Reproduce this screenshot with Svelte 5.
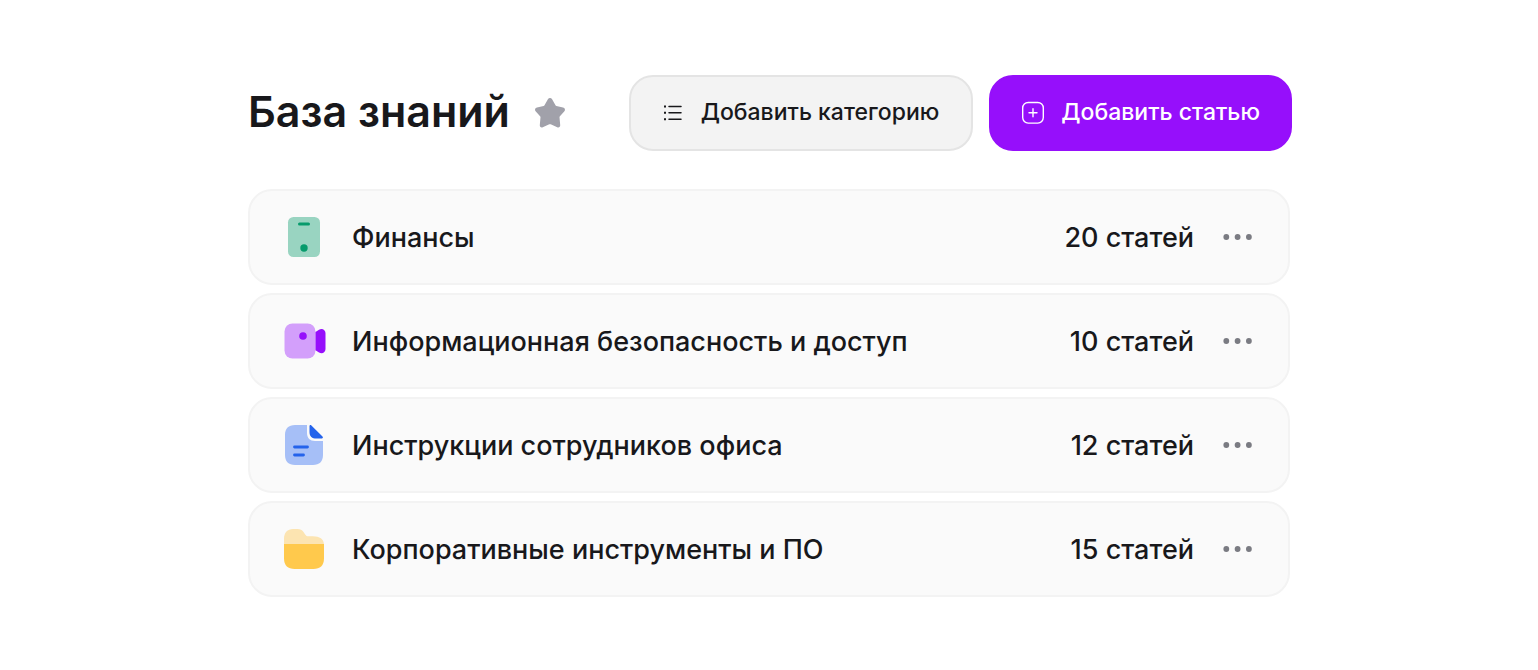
<script lang="ts">
  type Category = { icon: "phone" | "camera" | "doc" | "folder"; title: string; count: number };

  const categories: Category[] = [
    { icon: "phone", title: "Финансы", count: 20 },
    { icon: "camera", title: "Информационная безопасность и доступ", count: 10 },
    { icon: "doc", title: "Инструкции сотрудников офиса", count: 12 },
    { icon: "folder", title: "Корпоративные инструменты и ПО", count: 15 },
  ];

  let favorite = $state(false);
</script>

<main class="page">
  <header class="head">
    <h1>База знаний</h1>
    <button
      class="star"
      class:on={favorite}
      type="button"
      aria-label="Избранное"
      aria-pressed={favorite}
      onclick={() => (favorite = !favorite)}
    >
      <svg width="32" height="32" viewBox="0 0 32 32">
        <path d="M13.9 2.2C14.8.7 17.2.7 18.1 2.2L21.5 8.3C21.7 8.7 22 8.9 22.4 9L29 10.4C30.9 10.8 31.6 12.8 30.4 14.2L25.900 19.200C25.600 19.500 25.500 19.900 25.500 20.300L26.200 28C26.400 29.900 24.900 31.100 23.200 30.300L16.700 27.300C16.200 27.100 15.800 27.100 15.300 27.300L8.800 30.300C7.100 31.100 5.600 29.900 5.800 28L6.500 20.300C6.500 19.900 6.400 19.500 6.100 19.200L1.600 14.200C.4 12.800 1.100 10.800 3 10.400L9.600 9C10 8.900 10.300 8.700 10.500 8.300Z" />
      </svg>
    </button>
    <div class="actions">
      <button class="btn" type="button">
        <svg width="24" height="24" viewBox="0 0 24 24" fill="none" stroke="currentColor">
          <path stroke-width="1.500" stroke-linecap="round" d="M8 5.500h12M8 11.800h12M8 18.200h12" />
          <path stroke-width="2" d="M3 5.500h2M3 11.800h2M3 18.200h2" />
        </svg>
        <span>Добавить категорию</span>
      </button>
      <button class="btn primary" type="button">
        <svg width="24" height="24" viewBox="0 0 24 24" fill="none" stroke="currentColor" stroke-width="1.400" stroke-linecap="round">
          <rect x="1.700" y="1.500" width="20.600" height="20.600" rx="5.500" />
          <path d="M12 7.800v8M8 11.800h8" />
        </svg>
        <span>Добавить статью</span>
      </button>
    </div>
  </header>

  <ul class="list">
    {#each categories as c (c.title)}
      <li class="row">
        <svg class="icon" width="48" height="48" viewBox="0 0 48 48">
          {#if c.icon === "phone"}
            <rect x="8" y="4" width="32" height="40" rx="5.500" fill="#99d4c1" />
            <rect x="18" y="9.500" width="12" height="3" rx="1.500" fill="#079b6c" />
            <circle cx="24" cy="35" r="3.700" fill="#079b6c" />
          {:else if c.icon === "camera"}
            <rect x="4.500" y="6.500" width="31" height="35" rx="8" fill="#d39ffb" />
            <path d="M35.500 15L39 12.700C42 10.800 45.500 12.700 45.500 16V32C45.500 35.500 42 37.500 39 35.500L35.500 33.200Z" fill="#960ffb" />
            <circle cx="23" cy="19" r="3.800" fill="#960ffb" />
          {:else if c.icon === "doc"}
            <path d="M15 4H27V12C27 17 30 20 35 20H43V34C43 40.500 39.500 44 33 44H15C8.500 44 5 40.500 5 34V14C5 7.500 8.500 4 15 4Z" fill="#a6bff7" />
            <path d="M29.500 5.200C29.500 4 30.600 3.700 31.400 4.500L42.500 15.600C43.300 16.500 42.900 17.600 41.700 17.600H36.500C32 17.600 29.500 15.500 29.500 11Z" fill="#2463eb" />
            <path d="M14.500 26H27.500M14.500 34H23.500" stroke="#2463eb" stroke-width="2.800" stroke-linecap="round" />
          {:else}
            <path d="M4 20V14C4 7.500 7.500 4 13 4H17.500C20.500 4 21.800 4.700 23.500 7L25.200 9.500C26.200 10.900 26.800 11.300 28.500 11.300H33C39.500 11.300 44 14 44 20Z" fill="#fce4b1" />
            <path d="M4 19H44V33.500C44 40.500 40 44 33.500 44H14.500C8 44 4 40.500 4 33.500Z" fill="#ffc94c" />
          {/if}
        </svg>
        <a class="title" href="#{c.icon}">{c.title}</a>
        <span class="count">{c.count} статей</span>
        <button class="more" type="button" aria-label="Действия: {c.title}">
          <svg width="32" height="32" viewBox="0 0 32 32" fill="#7a7b82">
            <circle cx="4.300" cy="16" r="2.900" />
            <circle cx="15.600" cy="16" r="2.900" />
            <circle cx="26.900" cy="16" r="2.900" />
          </svg>
        </button>
      </li>
    {/each}
  </ul>
</main>

<style>
  :global(body) { background: #fff; }

  .page {
    box-sizing: border-box;
    padding: 75px 246px 72px 248px;
    font-family: "Inter", sans-serif;
    color: #18181b;
  }

  button { font-family: inherit; cursor: pointer; }
  svg { display: block; flex: none; }

  .head { display: flex; align-items: center; }

  h1 {
    margin: 0; padding-bottom: 4px;
    font-size: 43px; line-height: 52px; font-weight: 600;
    white-space: nowrap;
  }

  .star {
    margin-left: 24px; padding: 0;
    border: 0; background: none; color: #a1a1aa;
  }
  .star path { fill: currentColor; }
  .star.on { color: #ffc94c; }

  .actions { display: flex; gap: 16px; margin-left: auto; }

  .btn {
    display: flex; align-items: center; gap: 16px;
    height: 76px; padding: 0 32px 0 30px;
    border: 2px solid #e4e4e4; border-radius: 24px;
    background: #f3f3f3; color: #18181b;
    font-size: 23px; line-height: 28px; font-weight: 500;
    white-space: nowrap;
  }
  .btn span { padding-bottom: 2px; }
  .btn.primary {
    padding-right: 30px;
    border-color: #960ffb; background: #960ffb; color: #fff;
  }

  .list {
    display: flex; flex-direction: column; gap: 8px;
    margin: 38px 2px 0 0; padding: 0; list-style: none;
  }

  .row {
    display: flex; align-items: center;
    padding: 22px 34px 22px 30px;
    border: 2px solid #f3f3f3; border-radius: 24px;
    background: #fafafa;
    font-size: 27px; line-height: 32px; font-weight: 500;
  }
  .title, .count { padding-top: 2px; }
  .title { flex: 1; margin-left: 24px; color: inherit; text-decoration: none; }
  .count { white-space: nowrap; }
  .more { margin-left: 28px; padding: 0; border: 0; background: none; }
</style>
